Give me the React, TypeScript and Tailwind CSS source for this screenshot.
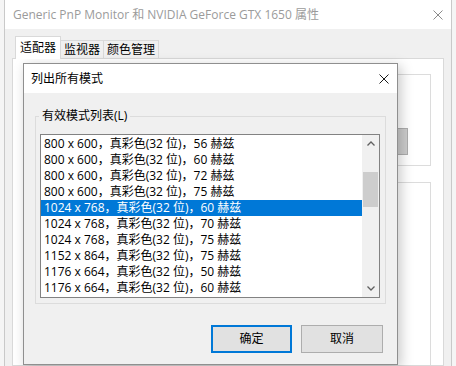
import React from 'react';

const MODES = [
    '800 x 600，真彩色(32 位)，56 赫兹',
    '800 x 600，真彩色(32 位)，60 赫兹',
    '800 x 600，真彩色(32 位)，72 赫兹',
    '800 x 600，真彩色(32 位)，75 赫兹',
    '1024 x 768，真彩色(32 位)，60 赫兹',
    '1024 x 768，真彩色(32 位)，70 赫兹',
    '1024 x 768，真彩色(32 位)，75 赫兹',
    '1152 x 864，真彩色(32 位)，75 赫兹',
    '1176 x 664，真彩色(32 位)，50 赫兹',
    '1176 x 664，真彩色(32 位)，60 赫兹',
];

const SELECTED = 4;

function CloseGlyph({ color }: { color: string }) {
    return (
        <svg width="10" height="10" viewBox="0 0 10 10">
            <path d="M0.5 0.5 L9.5 9.5 M9.5 0.5 L0.5 9.5" stroke={color} strokeWidth="1" fill="none" />
        </svg>
    );
}

function Chevron({ up }: { up?: boolean }) {
    return (
        <svg width="8" height="5" viewBox="0 0 8 5">
            <path
                d={up ? 'M0.5 4.5 L4 1 L7.5 4.5' : 'M0.5 0.5 L4 4 L7.5 0.5'}
                stroke="#606060"
                strokeWidth="1.3"
                fill="none"
            />
        </svg>
    );
}

function ModeList() {
    return (
        <div className="mt-[10px] ml-[4px] mr-[5px] h-[164px] border border-[#828282] bg-white flex">
            {/* rows */}
            <div className="flex-1 pt-[1px] overflow-hidden">
                {MODES.map((m, i) => (
                    <div
                        key={i}
                        className={`h-[16px] leading-[16px] pl-[3px] text-[12px] whitespace-nowrap ${
                            i === SELECTED ? 'bg-[#0078d7] text-white' : 'text-black'
                        }`}
                    >
                        {m}
                    </div>
                ))}
            </div>

            {/* scrollbar */}
            <div className="w-[17px] bg-[#f0f0f0] flex flex-col">
                <div className="h-[17px] flex items-center justify-center">
                    <Chevron up />
                </div>
                <div className="mt-[20px] mx-[1px] h-[35px] bg-[#cdcdcd]" />
                <div className="flex-1" />
                <div className="h-[17px] flex items-center justify-center">
                    <Chevron />
                </div>
            </div>
        </div>
    );
}

function ModesDialog() {
    return (
        <div className="absolute left-[23px] top-[63px] w-[375px] h-[302px] border border-[#8f8f8f] bg-[#f0f0f0] flex flex-col shadow-[3px_3px_12px_rgba(0,0,0,0.22)]">
            {/* Title bar */}
            <div className="h-[29px] bg-white flex items-center pl-[7px] pr-[8px]">
                <span className="flex-1 text-[12px] text-black">列出所有模式</span>
                <CloseGlyph color="#1a1a1a" />
            </div>

            {/* Group box */}
            <fieldset className="mt-[15px] mx-[11px] border border-[#dcdcdc] pb-[5px] min-w-0">
                <legend className="ml-[3px] px-[3px] text-[12px] leading-[16px] text-black">有效模式列表(L)</legend>
                <ModeList />
            </fieldset>

            {/* Buttons */}
            <div className="mt-[21px] flex justify-end gap-[9px] pr-[14px]">
                <button className="w-[81px] h-[28px] border-2 border-[#0078d7] bg-[#e1e1e1] text-[12px] text-black">
                    确定
                </button>
                <button className="w-[82px] h-[28px] border border-[#adadad] bg-[#e1e1e1] text-[12px] text-black">
                    取消
                </button>
            </div>
        </div>
    );
}

export default function App() {
    return (
        <div className="relative w-[456px] h-[366px] overflow-hidden flex bg-[#f5f5f5] font-['Open_Sans','Noto_Sans_CJK_SC',sans-serif]">
            <div className="w-[4px]" />

            {/* Outer properties window */}
            <div className="w-[448px] border-x border-[#c9c9c9] flex flex-col">
                <div className="h-[29px] bg-white flex items-center pl-[8px] pr-[8px]">
                    <span className="flex-1 text-[12px] text-[#9b9b9b] whitespace-nowrap">
                        Generic PnP Monitor 和 NVIDIA GeForce GTX 1650 属性
                    </span>
                    <CloseGlyph color="#8a8a8a" />
                </div>

                <div className="flex-1 bg-[#f0f0f0] px-[7px] flex flex-col">
                    {/* Tabs */}
                    <div className="mt-[7px] h-[22px] pl-[3px] flex items-end text-[12px] text-black">
                        <div className="relative z-10 w-[46px] h-[23px] -mb-[1px] bg-white border border-b-0 border-[#d9d9d9] flex items-center justify-center">
                            适配器
                        </div>
                        <div className="w-[43px] h-[18px] border border-l-0 border-b-0 border-[#d9d9d9] flex items-center justify-center">
                            监视器
                        </div>
                        <div className="w-[55px] h-[18px] border border-l-0 border-b-0 border-[#d9d9d9] flex items-center justify-center">
                            颜色管理
                        </div>
                    </div>

                    {/* Tab panel */}
                    <div className="flex-1 bg-white border border-[#d9d9d9] flex flex-col pl-[13px] pr-[12px]">
                        <div className="mt-[15px] h-[92px] border border-[#dcdcdc] flex justify-end pr-[22px] pt-[53px]">
                            <div className="w-[60px] h-[27px] border border-[#adadad] bg-[#cccccc]" />
                        </div>
                        <div className="mt-[16px] flex-1 border border-b-0 border-[#dcdcdc]" />
                    </div>
                </div>
            </div>

            <div className="flex-1" />

            <ModesDialog />
        </div>
    );
}
